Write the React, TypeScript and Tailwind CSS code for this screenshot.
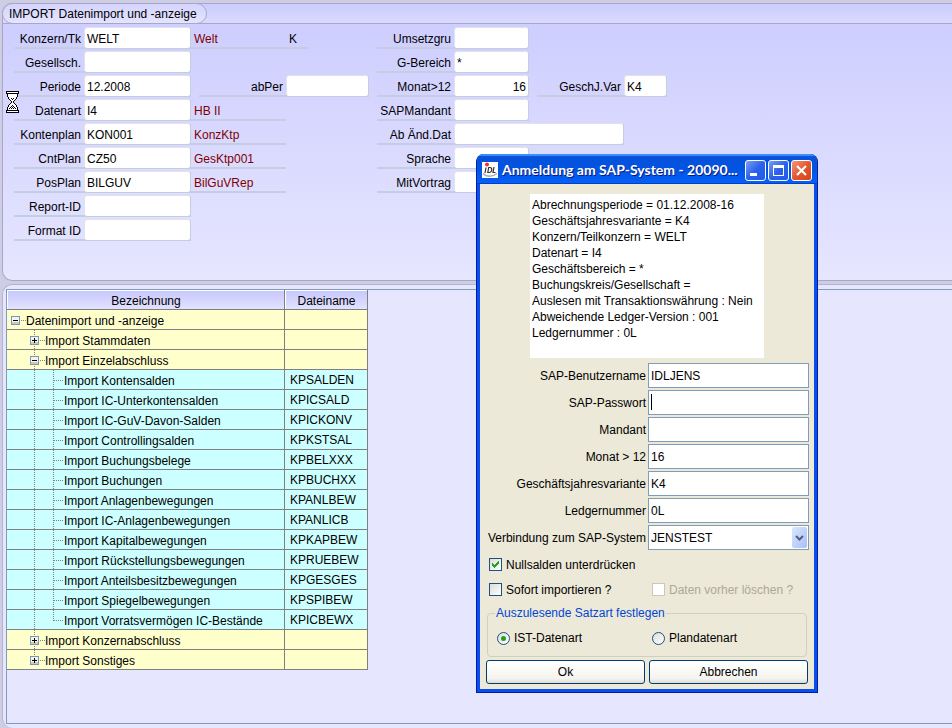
import type { ReactNode } from "react";

type FieldProps = {
  id: string;
  label: string;
  value?: string;
  labelWidth?: string;
  inputWidth?: string;
  align?: string;
  note?: string;
  extra?: string;
};

function Field({
  id,
  label,
  value = "",
  labelWidth = "w-[70px]",
  inputWidth = "w-[107px]",
  align = "text-left",
  note,
  extra,
}: FieldProps) {
  return (
    <div className="flex h-[22px] border-b-2 border-[#c5cde1]">
      <label htmlFor={id} className={`${labelWidth} pr-[3px] pt-1 text-right leading-4`}>
        {label}
      </label>
      <input
        id={id}
        defaultValue={value}
        className={`${inputWidth} ${align} h-[21px] rounded-[3px] border border-[#e2e0ea] border-r-[#c5cde1] border-b-0 bg-white px-[2px] pt-[2px] leading-4 outline-none`}
      />
      {note && <span className="w-[95px] pl-[3px] pt-1 leading-4 text-[#800000]">{note}</span>}
      {extra && <span className="w-[23px] pl-[3px] pt-1 leading-4">{extra}</span>}
    </div>
  );
}

const leftFields: FieldProps[] = [
  { id: "konzern", label: "Konzern/Tk", value: "WELT", note: "Welt", extra: "K" },
  { id: "gesellsch", label: "Gesellsch." },
  { id: "periode", label: "Periode", value: "12.2008" },
  { id: "datenart", label: "Datenart", value: "I4", note: "HB II" },
  { id: "kontenplan", label: "Kontenplan", value: "KON001", note: "KonzKtp" },
  { id: "cntplan", label: "CntPlan", value: "CZ50", note: "GesKtp001" },
  { id: "posplan", label: "PosPlan", value: "BILGUV", note: "BilGuVRep" },
  { id: "report", label: "Report-ID" },
  { id: "format", label: "Format ID" },
];

const rightFields: FieldProps[] = [
  { id: "umsetzgru", label: "Umsetzgru" },
  { id: "gbereich", label: "G-Bereich", value: "*" },
  { id: "monat", label: "Monat>12", value: "16", align: "text-right" },
  { id: "sapmandant", label: "SAPMandant" },
  { id: "abaend", label: "Ab Änd.Dat", inputWidth: "w-[170px]" },
  { id: "sprache", label: "Sprache" },
  { id: "mitvortrag", label: "MitVortrag" },
];

type Row = { level: number; name: string; file?: string; open?: boolean };

const rows: Row[] = [
  { level: 0, name: "Datenimport und -anzeige", open: true },
  { level: 1, name: "Import Stammdaten", open: false },
  { level: 1, name: "Import Einzelabschluss", open: true },
  { level: 2, name: "Import Kontensalden", file: "KPSALDEN" },
  { level: 2, name: "Import IC-Unterkontensalden", file: "KPICSALD" },
  { level: 2, name: "Import IC-GuV-Davon-Salden", file: "KPICKONV" },
  { level: 2, name: "Import Controllingsalden", file: "KPKSTSAL" },
  { level: 2, name: "Import Buchungsbelege", file: "KPBELXXX" },
  { level: 2, name: "Import Buchungen", file: "KPBUCHXX" },
  { level: 2, name: "Import Anlagenbewegungen", file: "KPANLBEW" },
  { level: 2, name: "Import IC-Anlagenbewegungen", file: "KPANLICB" },
  { level: 2, name: "Import Kapitalbewegungen", file: "KPKAPBEW" },
  { level: 2, name: "Import Rückstellungsbewegungen", file: "KPRUEBEW" },
  { level: 2, name: "Import Anteilsbesitzbewegungen", file: "KPGESGES" },
  { level: 2, name: "Import Spiegelbewegungen", file: "KPSPIBEW" },
  { level: 2, name: "Import Vorratsvermögen IC-Bestände", file: "KPICBEWX" },
  { level: 1, name: "Import Konzernabschluss", open: false },
  { level: 1, name: "Import Sonstiges", open: false },
];

/** Dotted guide lines and the expander box in front of a tree label. */
function TreeGuides({ row, last, lastChild }: { row: Row; last: boolean; lastChild: boolean }) {
  const width = [19, 38, 57][row.level];
  const boxX = row.level === 0 ? 4 : 23;
  const dots = { stroke: "#808080", strokeWidth: 1, strokeDasharray: "1 1" };
  return (
    <svg width={width} height="19" className="shrink-0" shapeRendering="crispEdges" aria-hidden="true">
      {row.level > 0 && <path d={last ? "M27.5 0V11" : "M27.5 0V19"} {...dots} />}
      {row.level === 2 && (
        <>
          <path d={lastChild ? "M46.5 0V11" : "M46.5 0V19"} {...dots} />
          <path d="M47 10.5H57" {...dots} />
        </>
      )}
      {row.level < 2 && (
        <>
          <path d={`M${boxX + 10} 10.5H${width}`} {...dots} />
          <rect x={boxX + 0.5} y="6.5" width="8" height="8" fill="#f4f3ee" stroke="#7898b5" />
          <path d={`M${boxX + 1} 12.5h7M${boxX + 1} 13.5h7`} stroke="#cfcabc" />
          <path d={`M${boxX + 2} 10.5h5`} stroke="#000" />
          {!row.open && <path d={`M${boxX + 4.5} 8v5`} stroke="#000" />}
        </>
      )}
    </svg>
  );
}

function ImportTable() {
  return (
    <table className="w-[361px] table-fixed border-separate border-spacing-0">
      <thead>
        <tr className="h-5">
          <th className="h-5 w-[278px] border-b border-r border-[#808080] p-0 font-normal">
            <div className="h-[19px] border-l border-t border-white bg-linear-to-b from-[#c8c8fc] to-[#e2e2ff] pt-[2px] leading-4">
              Bezeichnung
            </div>
          </th>
          <th className="h-5 w-[83px] border-b border-r border-[#808080] p-0 font-normal">
            <div className="h-[19px] border-l border-t border-white bg-linear-to-b from-[#c8c8fc] to-[#e2e2ff] pt-[2px] leading-4">
              Dateiname
            </div>
          </th>
        </tr>
      </thead>
      <tbody>
        {rows.map((row, i) => (
          <tr key={row.name} className={row.level === 2 ? "h-5 bg-[#ccffff]" : "h-5 bg-[#ffffcc]"}>
            <td className="h-5 border-b border-r border-[#808080] p-0">
              <div className="flex h-[19px]">
                <TreeGuides
                  row={row}
                  last={i === rows.length - 1}
                  lastChild={row.level === 2 && rows[i + 1]?.level !== 2}
                />
                <span className="whitespace-nowrap pt-[3px] leading-4">{row.name}</span>
              </div>
            </td>
            <td className="h-5 border-b border-r border-[#808080] p-0">
              <div className="h-[19px] pl-[5px] pt-[2px] leading-4">{row.file}</div>
            </td>
          </tr>
        ))}
      </tbody>
    </table>
  );
}

const summary = [
  "Abrechnungsperiode = 01.12.2008-16",
  "Geschäftsjahresvariante = K4",
  "Konzern/Teilkonzern = WELT",
  "Datenart = I4",
  "Geschäftsbereich = *",
  "Buchungskreis/Gesellschaft =",
  "Auslesen mit Transaktionswährung : Nein",
  "Abweichende Ledger-Version : 001",
  "Ledgernummer : 0L",
];

const loginFields = [
  { id: "user", label: "SAP-Benutzername", value: "IDLJENS" },
  { id: "password", label: "SAP-Passwort", value: "" },
  { id: "mandant", label: "Mandant", value: "" },
  { id: "monat12", label: "Monat > 12", value: "16" },
  { id: "variante", label: "Geschäftsjahresvariante", value: "K4" },
  { id: "ledger", label: "Ledgernummer", value: "0L" },
];

function LoginRow({ id, label, children }: { id: string; label: string; children: ReactNode }) {
  return (
    <div className="flex h-[25px] items-center">
      <label htmlFor={id} className="flex-1 whitespace-nowrap pr-[2px] text-right leading-4">
        {label}
      </label>
      <div className="relative h-[25px] w-[161px] shrink-0">{children}</div>
    </div>
  );
}

function Check({ label, checked, disabled }: { label: string; checked?: boolean; disabled?: boolean }) {
  return (
    <label className={`flex h-[25px] items-center gap-1 ${disabled ? "text-[#aca899]" : ""}`}>
      <span className="relative size-[13px]">
        <input
          type="checkbox"
          defaultChecked={checked}
          disabled={disabled}
          className="block size-[13px] appearance-none border border-[#1c5180] bg-linear-to-br from-[#dcdcd7] to-white disabled:border-[#cac8bb] disabled:from-white"
        />
        {checked && (
          <svg width="13" height="13" className="pointer-events-none absolute inset-0" shapeRendering="crispEdges" aria-hidden="true">
            <path d="M3 5v3h1v1h1v1h1V9h1V8h1V7h1V6h1V3H9v1H8v1H7v1H6v1H5V6H4V5z" fill="#21a121" />
          </svg>
        )}
      </span>
      <span className="whitespace-nowrap leading-4">{label}</span>
    </label>
  );
}

function Radio({ label, checked }: { label: string; checked?: boolean }) {
  return (
    <label className="flex items-center gap-1">
      <span className="relative size-[13px]">
        <input
          type="radio"
          name="satzart"
          defaultChecked={checked}
          className="block size-[13px] appearance-none rounded-full border border-[#1c5180] bg-linear-to-br from-[#dcdcd7] to-white"
        />
        {checked && (
          <span className="pointer-events-none absolute left-1 top-1 size-[5px] rounded-full bg-[#21a121]" />
        )}
      </span>
      <span className="whitespace-nowrap leading-4">{label}</span>
    </label>
  );
}

function CaptionButton({ label, tone, children }: { label: string; tone: string; children: ReactNode }) {
  return (
    <button
      type="button"
      aria-label={label}
      className={`flex size-[21px] items-center justify-center rounded-[3px] border border-white ${tone}`}
    >
      <svg width="19" height="19" aria-hidden="true">
        {children}
      </svg>
    </button>
  );
}

function LoginDialog() {
  const blue = "bg-linear-to-br from-[#7a9cf5] via-[#2c62ea] to-[#1f5bea]";
  const push =
    "h-6 flex-1 rounded-[3px] border border-[#003c74] bg-linear-to-b from-white from-10% via-[#f4f3ee] via-80% to-[#dfddd2] leading-4";
  return (
    <section
      role="dialog"
      aria-label="Anmeldung am SAP-System"
      className="absolute left-[476px] top-[154px] w-[342px] overflow-hidden rounded-t-lg border-x border-b border-[#001ea0] bg-[#0a4fee]"
    >
      <header className="flex h-[30px] items-center bg-linear-to-b from-[#0a50d8] via-[#0054e3] to-[#0660fa] px-[5px] pt-[2px] shadow-[inset_0_2px_1px_#3c91ff,inset_0_-1px_0_#0540c0]">
        <svg width="16" height="16" className="shrink-0" aria-hidden="true">
          <rect width="16" height="16" fill="#fff" />
          <path d="M1 11.500c3 3.500 10 3.500 14 0" fill="none" stroke="#b0b0b0" strokeWidth="1.500" />
          <circle cx="5" cy="2.500" r="2" fill="#e8323a" />
          <path
            d="M4 5.500L3 11M6.700 5.500L5.800 10.500h1.400c1.500 0 2.300-1 2.500-2.500S9.300 5.500 8 5.500zM12 5l-1 5.500h2.500"
            fill="none"
            stroke="#333"
            strokeWidth="1.200"
          />
        </svg>
        <h1 className="min-w-0 flex-1 whitespace-nowrap pl-1 font-[Lato,sans-serif] text-sm font-bold leading-5 text-white [text-shadow:1px_1px_#0a1883]">
          Anmeldung am SAP-System - 20090...
        </h1>
        <div className="flex shrink-0 gap-[2px]">
          <CaptionButton label="Minimieren" tone={blue}>
            <path d="M4 12h7v3H4z" fill="#fff" />
          </CaptionButton>
          <CaptionButton label="Maximieren" tone={blue}>
            <path d="M4 4h11v11H4zM5 7v7h9V7z" fill="#fff" fillRule="evenodd" />
          </CaptionButton>
          <CaptionButton label="Schließen" tone="bg-linear-to-br from-[#f0987c] via-[#e2572f] to-[#d2441a]">
            <path d="M5 5l9 9M14 5l-9 9" stroke="#fff" strokeWidth="2.200" />
          </CaptionButton>
        </div>
      </header>
      <form className="mx-[3px] mb-[3px] bg-[#ece9d8] px-[5px] pb-[5px] pt-[10px]">
        <div className="ml-[45px] h-[164px] w-[234px] bg-white px-[2px] pt-[3px] leading-4">
          {summary.map((line) => (
            <p key={line} className="whitespace-nowrap">
              {line}
            </p>
          ))}
        </div>
        <div className="mt-[5px] flex flex-col gap-[2px]">
          {loginFields.map((f) => (
            <LoginRow key={f.id} id={f.id} label={f.label}>
              <input
                id={f.id}
                type={f.id === "password" ? "password" : "text"}
                defaultValue={f.value}
                className="block h-[25px] w-full border border-[#7f9db9] bg-white px-[2px] leading-4 outline-none"
              />
              {f.id === "password" && <span className="pointer-events-none absolute left-[3px] top-1 h-4 w-px bg-black" />}
            </LoginRow>
          ))}
          <LoginRow id="verbindung" label="Verbindung zum SAP-System">
            <select
              id="verbindung"
              className="block h-[25px] w-full appearance-none border border-[#7f9db9] bg-white px-[2px] leading-4 outline-none"
            >
              <option>JENSTEST</option>
            </select>
            <span className="pointer-events-none absolute right-[2px] top-[2px] flex h-[21px] w-[15px] items-center justify-center rounded-[2px] bg-linear-to-br from-[#dbe6ff] to-[#a9c0f5]">
              <svg width="9" height="6" aria-hidden="true">
                <path d="M1 1l3.500 3.500L8 1" fill="none" stroke="#4d6185" strokeWidth="2" />
              </svg>
            </span>
          </LoginRow>
        </div>
        <div className="ml-1 mt-[2px] grid grid-cols-[163px_1fr]">
          <Check label="Nullsalden unterdrücken" checked />
          <span />
          <Check label="Sofort importieren ?" />
          <Check label="Daten vorher löschen ?" disabled />
        </div>
        <fieldset className="mx-[2px] mt-[3px] h-[52px] rounded-[4px] border border-[#d0d0bf] px-[9px]">
          <legend className="-ml-[2px] px-px leading-4 text-[#0046d5]">Auszulesende Satzart festlegen</legend>
          <div className="grid grid-cols-[155px_1fr] pt-[9px]">
            <Radio label="IST-Datenart" checked />
            <Radio label="Plandatenart" />
          </div>
        </fieldset>
        <div className="mx-px mt-[3px] flex gap-1">
          <button type="button" className={push}>
            Ok
          </button>
          <button type="button" className={push}>
            Abbrechen
          </button>
        </div>
      </form>
    </section>
  );
}

function Hourglass() {
  return (
    <svg width="13" height="22" className="absolute left-[6px] top-[91px]" shapeRendering="crispEdges" aria-hidden="true">
      <path d="M2 3h9v3l-3 4v2l3 4v3H2v-3l3-4v-2L2 6z" fill="#fff" />
      <path
        d="M0 0h13v3H0zM0 19h13v3H0zM1 3h1v3H1zM11 3h1v3h-1zM2 6h1v2H2zM10 6h1v2h-1zM3 8h1v1H3zM9 8h1v1H9zM4 9h1v1H4zM8 9h1v1H8zM5 10h1v2H5zM7 10h1v2H7zM4 12h1v1H4zM8 12h1v1H8zM3 13h1v1H3zM9 13h1v1H9zM2 14h1v2H2zM10 14h1v2h-1zM1 16h1v3H1zM11 16h1v3h-1zM5 7h1v1H5zM7 7h1v1H7zM6 8h1v1H6zM6 14h1v1H6zM5 15h1v1H5zM7 15h1v1H7zM4 16h1v1H4zM6 16h1v1H6zM8 16h1v1H8zM3 17h1v1H3zM5 17h1v1H5zM7 17h1v1H7zM9 17h1v1H9z"
        fill="#000"
      />
      <path d="M1 1h11v1H1zM1 20h11v1H1z" fill="#fff" />
    </svg>
  );
}

export default function App() {
  return (
    <main className="relative flex min-h-screen flex-col gap-[3px] overflow-hidden bg-[#cfcde3] pl-[2px] pt-[3px] font-['Liberation_Sans',Arial,sans-serif] text-xs text-black">
      <section className="rounded-l-[10px] border-y border-l border-[#a8a8c6] bg-linear-to-b from-[#ccccff] to-[#e6e6ff]">
        <div className="flex h-5 rounded-tl-[10px] border-b border-[#a8a8c6] bg-linear-to-b from-[#ccccff] to-[#dadaff]">
          <h2 className="-ml-px -mt-px h-[21px] w-[205px] rounded-full border border-[#a8a8c6] bg-linear-to-b from-[#d4d4ff] to-[#e4e4ff] pl-[6px] pt-[2px] leading-4">
            IMPORT Datenimport und -anzeige
          </h2>
        </div>
        <form className="flex items-start pb-[39px] pl-[11px] pt-[3px]">
          <div className="flex w-[363px] shrink-0 flex-col items-start gap-[2px]">
            {leftFields.map((f) =>
              f.id === "periode" ? (
                <div key={f.id} className="flex gap-2">
                  <Field {...f} />
                  <Field id="abper" label="abPer" labelWidth="w-[87px]" inputWidth="w-[83px]" />
                </div>
              ) : (
                <Field key={f.id} {...f} />
              ),
            )}
          </div>
          <div className="flex flex-col items-start gap-[2px]">
            {rightFields.map((f) => {
              const field = <Field key={f.id} labelWidth="w-[77px]" inputWidth="w-[75px]" {...f} />;
              return f.id === "monat" ? (
                <div key={f.id} className="flex gap-2">
                  {field}
                  <Field id="geschjvar" label="GeschJ.Var" value="K4" labelWidth="w-[87px]" inputWidth="w-[43px]" />
                </div>
              ) : (
                field
              );
            })}
          </div>
        </form>
      </section>

      <section className="flex flex-1 flex-col rounded-l-[10px] border-l border-t border-[#b4b4cc] bg-[#e6e6ff] pb-1 pl-[3px] pt-1">
        <div className="flex-1 border-y border-l border-[#7f9db9] bg-[#e6e6ff]">
          <ImportTable />
        </div>
      </section>

      <LoginDialog />
      <Hourglass />
    </main>
  );
}
